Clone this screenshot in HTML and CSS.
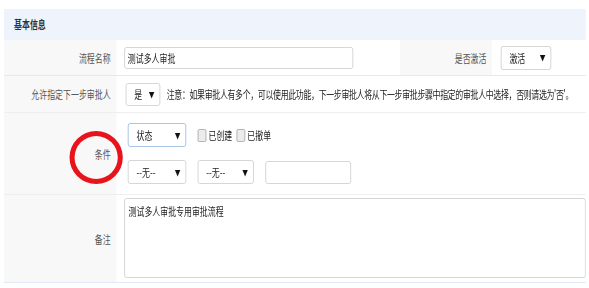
FILE: index.html
```html
<!DOCTYPE html>
<html lang="zh-CN">
<head>
    <meta charset="UTF-8">
    <title>基本信息</title>
    <link rel="stylesheet" href="styles.css">
</head>
<body>
    <div class="frame">
    <div class="page">
        <div class="head">基本信息</div>

        <div class="row row-name">
            <div class="label">流程名称</div>
            <div class="value"><input class="text name-input" type="text" value="测试多人审批"></div>
            <div class="label">是否激活</div>
            <div class="value"><span class="select sel-active">激活<i>▼</i></span></div>
        </div>

        <div class="row row-next">
            <div class="label">允许指定下一步审批人</div>
            <div class="value">
                <span class="select sel-yes">是<i>▼</i></span>
                <span class="note">注意：如果审批人有多个，可以使用此功能，下一步审批人将从下一步审批步骤中指定的审批人中选择，否则请选为'否'。</span>
            </div>
        </div>

        <div class="row row-cond">
            <div class="label">
                条件
                <span class="mark"></span>
            </div>
            <div class="value cond">
                <div class="cond-line">
                    <span class="select sel-state focus">状态<i>▼</i></span>
                    <label class="check"><span class="box"></span>已创建</label>
                    <label class="check"><span class="box"></span>已撤单</label>
                </div>
                <div class="cond-line">
                    <span class="select sel-none">--无--<i>▼</i></span>
                    <span class="select sel-none2">--无--<i>▼</i></span>
                    <input class="text cond-input" type="text">
                </div>
            </div>
        </div>

        <div class="row row-memo">
            <div class="label">备注</div>
            <div class="value">
                <textarea class="memo">测试多人审批专用审批流程</textarea>
            </div>
        </div>
    </div>
    </div>
</body>
</html>
```

FILE: styles.css
```css
body {
    margin: 0;
    padding: 9px 0 0 4px;
    background: #fff;
    overflow: hidden;
    font-family: "Noto Sans CJK SC", "Liberation Sans", sans-serif;
    font-size: 11px;
    color: #222;
}

.frame {
    width: 582px;
    overflow: hidden;
}

/* the screenshot is squeezed horizontally, so the whole sheet is too */
.page {
    width: 808px;
    transform: scaleX(0.72);
    transform-origin: 0 0;
}

.head {
    height: 31px;
    line-height: 31px;
    padding-left: 14px;
    background: #eef3fc;
    font-weight: bold;
    color: #333;
}

.row {
    display: grid;
    grid-template-columns: 156px 1fr;
    border-bottom: 1px solid #eeeeee;
}
.row-name {
    grid-template-columns: 156px 1fr 128px 130px;
    height: 35px;
    border-bottom-color: #e1e9f6;
}
.row-next {
    height: 36px;
}
.row-cond {
    height: 81px;
}
.row-memo {
    height: 87px;
    border-bottom-color: #e1e9f6;
}

.label {
    position: relative;
    display: flex;
    align-items: center;
    justify-content: flex-end;
    padding-right: 8px;
    background: #f8f8f8;
    color: #555;
}

.value {
    display: flex;
    align-items: center;
    padding-left: 11px;
}

.text,
.memo {
    box-sizing: border-box;
    border: 1px solid #cfcfcf;
    border-radius: 3px;
    background: #fff;
    font-family: inherit;
    font-size: 11px;
    color: #222;
    outline: none;
}
.text {
    height: 22px;
    padding: 0 4px;
}
.name-input {
    width: 318px;
}

.select {
    box-sizing: border-box;
    display: inline-flex;
    align-items: center;
    justify-content: space-between;
    height: 24px;
    padding: 0 7px 0 11px;
    border: 1px solid #cfcfcf;
    border-radius: 3px;
    background: #fff;
    color: #222;
}
.select i {
    font-style: normal;
    font-size: 8px;
    color: #111;
}
.select.focus {
    border-color: #9dbce6;
}
.sel-active {
    width: 70px;
    margin-left: 1px;
}
.sel-yes {
    width: 48px;
    height: 23px;
    margin-left: 2px;
}
.sel-state {
    width: 81px;
}
.sel-none {
    width: 81px;
}
.sel-none2 {
    width: 78px;
    margin-left: 16px;
}

.note {
    margin-left: 9px;
    white-space: nowrap;
    letter-spacing: -0.45px;
}

.cond {
    flex-direction: column;
    align-items: flex-start;
    justify-content: flex-start;
    padding: 10px 0 0 16px;
    gap: 13px;
}
.cond-line {
    display: flex;
    align-items: center;
}
.check {
    display: inline-flex;
    align-items: center;
    margin-left: 16px;
}
.check + .check {
    margin-left: 6px;
}
.box {
    display: inline-block;
    width: 10px;
    height: 11px;
    margin-right: 3px;
    border: 1px solid #a9a9a9;
    border-radius: 2px;
    background: #ececec;
}
.cond-input {
    width: 119px;
    margin-left: 16px;
    height: 23px;
}

/* red ring drawn over the label */
.mark {
    position: absolute;
    left: 91px;
    top: 18px;
    width: 60px;
    height: 43px;
    border: 5px solid #e8141b;
    border-left-width: 7px;
    border-right-width: 7px;
    border-radius: 50%;
}

.row-memo .value {
    align-items: stretch;
    padding: 3px 0 4px 11px;
}
.memo {
    width: 100%;
    padding: 4px 5px;
    resize: none;
    line-height: 16px;
}
```
